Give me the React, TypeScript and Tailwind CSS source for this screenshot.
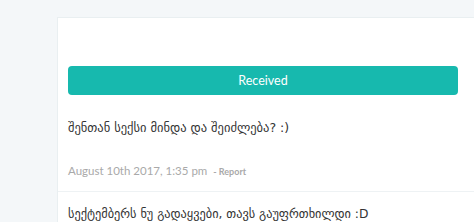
export default function App() {
  const geo = { fontFamily: '"DejaVu Sans", sans-serif' };
  const latin = { fontFamily: 'Lato, "Open Sans", sans-serif' };

  return (
    <div className="h-[222px] w-[474px] overflow-hidden bg-[#f4f7f9] pt-[17px] pl-[57px]">
      <div className="w-[430px] border border-[#e9eff1] bg-white">
        <div className="px-[10px] pt-[48px]">
          <button
            className="flex h-[29px] w-[390px] items-center justify-center rounded-[4px] bg-[#17b9ae] pt-[1px] text-[12.5px] text-white"
            style={latin}
          >
            Received
          </button>
          <p className="mt-[24px] text-[12.5px] leading-[18px] text-[#333]" style={geo}>
            შენთან სექსი მინდა და შეიძლება? :)
          </p>
          <div className="mt-[25px] flex items-baseline gap-[6px] pb-[12px]" style={latin}>
            <span className="text-[11.5px] text-[#a9a9a9]">August 10th 2017, 1:35 pm</span>
            <span className="text-[9px] font-bold text-[#a9a9a9]">- Report</span>
          </div>
        </div>
        <div className="border-t border-[#eef2f4] px-[10px] pt-[13px]">
          <p className="text-[12.3px] leading-[18px] text-[#333]" style={geo}>
            სექტემბერს ნუ გადაყვები, თავს გაუფრთხილდი :D
          </p>
        </div>
      </div>
    </div>
  );
}
